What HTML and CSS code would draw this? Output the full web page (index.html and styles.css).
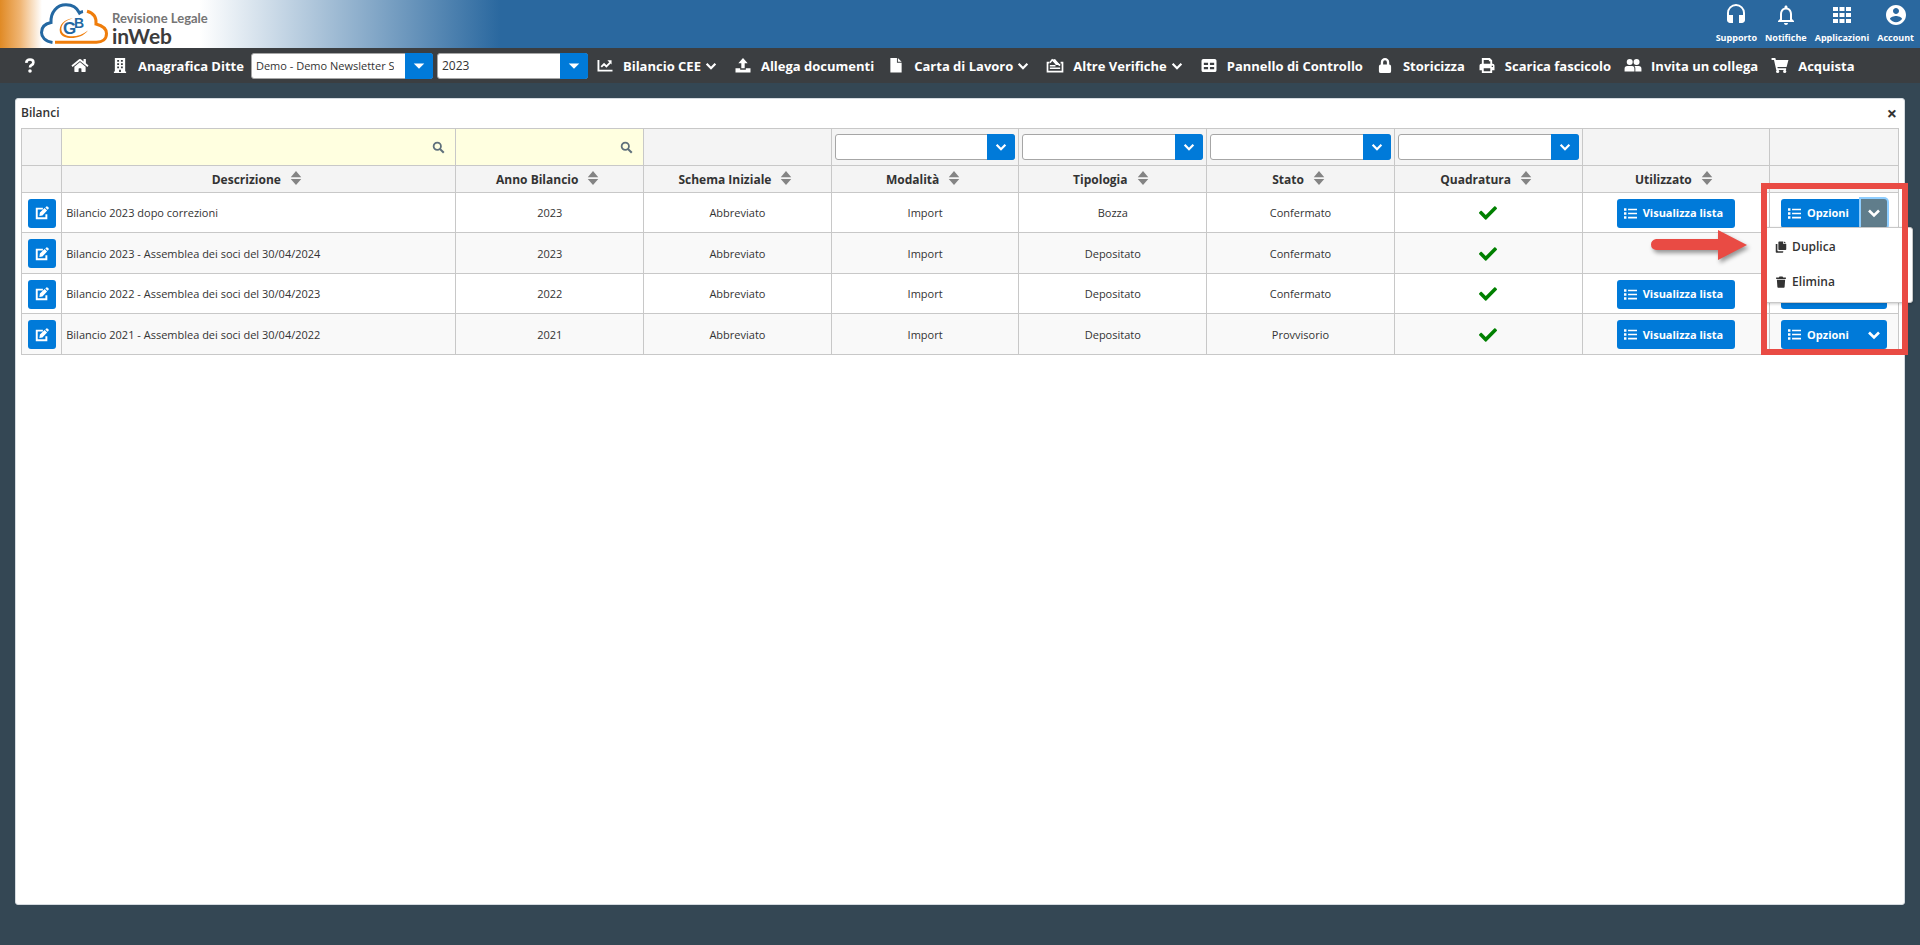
FILE: index.html
```html
<!DOCTYPE html>
<html lang="it">
<head>
<meta charset="utf-8">
<title>Revisione Legale inWeb - Bilanci</title>
<link rel="stylesheet" href="styles.css">
</head>
<body>
<svg class="sprite" aria-hidden="true">
  <symbol id="i-chevron" viewBox="0 0 16 16"><path d="M3 5.500l5 5 5-5" fill="none" stroke="currentColor" stroke-width="2.600"/></symbol>
  <symbol id="i-caret" viewBox="0 0 16 16"><path d="M2 5h12l-6 6z" fill="currentColor"/></symbol>
  <symbol id="i-sort" viewBox="0 0 12 16"><path d="M6 0l6 7H0zM6 16l6-7H0z" fill="currentColor"/></symbol>
  <symbol id="i-search" viewBox="0 0 16 16"><circle cx="6.500" cy="6.500" r="4.500" fill="none" stroke="currentColor" stroke-width="2.200"/><path d="M10 10l4.500 4.500" stroke="currentColor" stroke-width="2.600"/></symbol>
  <symbol id="i-edit" viewBox="0 0 16 16"><path d="M9 3H2v11h11V9.500" fill="none" stroke="currentColor" stroke-width="2.200"/><path d="M5 11.500l.6-4L11 2.200 13.800 5 8.500 10.900zM11.800 1.600L13 .5q.6-.5 1.200 0l1.300 1.300q.6.6 0 1.200L14.400 4.200z" fill="currentColor"/></symbol>
  <symbol id="i-list" viewBox="0 0 16 16"><path d="M0 1.500h3v3H0zM0 6.500h3v3H0zM0 11.500h3v3H0zM5 2h11v2H5zM5 7h11v2H5zM5 12h11v2H5z" fill="currentColor"/></symbol>
  <symbol id="i-check" viewBox="0 0 512 512"><path fill="currentColor" d="M173.900 439.400L7.500 273c-10-10-10-26.200 0-36.200l36.200-36.200c10-10 26.200-10 36.200 0L192 312.700 432.100 72.600c10-10 26.200-10 36.200 0l36.200 36.200c10 10 10 26.200 0 36.200L210.100 439.400c-10 10-26.200 10-36.200 0z"/></symbol>
  <symbol id="i-copy" viewBox="0 0 16 16"><path fill="currentColor" d="M1 4h2.200v8.500q0 1 1 1h6.800v1q0 1-1 1H2q-1 0-1-1zM5.500.5H11V4h4v7q0 1-1 1H5.500q-1 0-1-1V1.500q0-1 1-1zM12 .5L15 3h-3z"/></symbol>
  <symbol id="i-trash" viewBox="0 0 16 16"><path fill="currentColor" d="M1.500 2H5l1-1.500h4L11 2h3.500v2h-13zM2.500 5h11l-.7 9.500q-.1 1-1 1H4.200q-.9 0-1-1z"/></symbol>
  <symbol id="i-home" viewBox="0 0 576 512"><path fill="currentColor" d="M280.400 148.300L96 300.100V464a16 16 0 0 0 16 16l112.100-.3a16 16 0 0 0 15.900-16V368a16 16 0 0 1 16-16h64a16 16 0 0 1 16 16v95.600a16 16 0 0 0 16 16.100L464 480a16 16 0 0 0 16-16V300L295.700 148.300a12.200 12.200 0 0 0-15.300 0zM571.600 251.500L488 182.600V44a12 12 0 0 0-12-12h-56a12 12 0 0 0-12 12v72.600L318.500 43a48 48 0 0 0-61 0L4.300 251.500a12 12 0 0 0-1.600 16.900l25.500 31a12 12 0 0 0 16.900 1.600l235.300-193.700a12.200 12.200 0 0 1 15.300 0L530.900 301a12 12 0 0 0 16.900-1.600l25.500-31a12 12 0 0 0-1.700-16.900z"/></symbol>
  <symbol id="i-building" viewBox="0 0 16 16"><path fill="currentColor" fill-rule="evenodd" d="M2.500 0h11v14.500h1V16h-13v-1.500h1zM5 2v2h2V2zm4 0v2h2V2zM5 5.500v2h2v-2zm4 0v2h2v-2zM5 9v2h2V9zm4 0v2h2V9zM7 12.500V15h2v-2.500z"/></symbol>
  <symbol id="i-question" viewBox="0 0 16 16"><path d="M4 5.200Q4.300 1.600 8 1.600q3.600 0 3.600 3.100 0 1.800-1.900 2.800Q8 8.400 8 10.200" fill="none" stroke="currentColor" stroke-width="2.800"/><circle cx="8" cy="13.800" r="1.900" fill="currentColor"/></symbol>
  <symbol id="i-chart" viewBox="0 0 16 16"><path d="M1 2v11.500h15" fill="none" stroke="currentColor" stroke-width="2"/><path d="M4 9.500L7 6.500l2.500 2.500 4-4" fill="none" stroke="currentColor" stroke-width="2"/><path d="M10.500 2.500H15V7z" fill="currentColor"/></symbol>
  <symbol id="i-upload" viewBox="0 0 16 16"><path fill="currentColor" d="M8 0l5 5.500H9.800V11H6.200V5.500H3zM0 11h5v1.500h6V11h5v4.500H0z"/></symbol>
  <symbol id="i-file" viewBox="0 0 16 16"><path fill="currentColor" d="M2 0H9v5h5v10.500H2zM10 0l4 4h-4z"/></symbol>
  <symbol id="i-ballot" viewBox="0 0 18 16"><path d="M3 5H1v9.500h16V5h-2" fill="none" stroke="currentColor" stroke-width="1.800"/><path d="M3.500 5L6 2l8.500 6M3.500 8.200h6M3.500 11h11" fill="none" stroke="currentColor" stroke-width="1.700"/><path d="M5.500 2L9 1l5.500 6.500H10z" fill="currentColor"/></symbol>
  <symbol id="i-table" viewBox="0 0 16 16"><path fill="currentColor" fill-rule="evenodd" d="M2 1h12q2 0 2 2v10q0 2-2 2H2q-2 0-2-2V3q0-2 2-2zM2.500 5v2.500H7V5zM9 5v2.500h4.500V5zM2.500 9.500V12H7V9.500zM9 9.500V12h4.500V9.500z"/></symbol>
  <symbol id="i-lock" viewBox="0 0 16 16"><path fill="currentColor" fill-rule="evenodd" d="M3.500 7V4.500a4.500 4.500 0 0 1 9 0V7q2 0 2 2v5q0 2-2 2h-9q-2 0-2-2V9q0-2 2-2zM6 7h4V4.500a2 2 0 0 0-4 0z"/></symbol>
  <symbol id="i-print" viewBox="0 0 16 16"><path fill="currentColor" fill-rule="evenodd" d="M2.500 0H11l2.500 2.500V6H14q2 0 2 2v5h-2.500v3h-11v-3H0V8q0-2 2-2h.5zM4.500 2v4h7V3.500H10V2zM4.500 11v3h7v-3zM13 8.200v1.400h1.400V8.200z"/></symbol>
  <symbol id="i-users" viewBox="0 0 18 16"><path fill="currentColor" d="M5.500 1a3.200 3.200 0 1 1 0 6.400 3.200 3.200 0 0 1 0-6.400zM12.800 1a3.200 3.200 0 1 1 0 6.400 3.200 3.200 0 0 1 0-6.400zM0 14.500V11.500q0-3 3-3h5q2.500 0 2.500 3v3zM11.500 14.500V11q0-1.500-1-2.500H15q3 0 3 3v3z"/></symbol>
  <symbol id="i-cart" viewBox="0 0 18 16"><path fill="currentColor" d="M0 0h4l.6 2H18l-2 7.500H6.200l.4 1.500H15.500v1.800H5L2.600 2H0z"/><circle cx="6.500" cy="14.300" r="1.700" fill="currentColor"/><circle cx="14" cy="14.300" r="1.700" fill="currentColor"/></symbol>
  <symbol id="i-headset" viewBox="0 0 24 24"><path fill="currentColor" d="M12 1a9 9 0 0 0-9 9v7c0 1.660 1.340 3 3 3h3v-8H5v-2c0-3.870 3.130-7 7-7s7 3.130 7 7v2h-4v8h3c1.660 0 3-1.340 3-3v-7a9 9 0 0 0-9-9z"/></symbol>
  <symbol id="i-bell" viewBox="0 0 24 24"><path fill="currentColor" d="M12 22c1.100 0 2-.9 2-2h-4c0 1.100.9 2 2 2zm6-6v-5c0-3.070-1.630-5.640-4.500-6.320V4c0-.83-.67-1.500-1.500-1.500s-1.500.67-1.500 1.500v.68C7.640 5.360 6 7.920 6 11v5l-2 2v1h16v-1l-2-2zm-2 1H8v-6c0-2.480 1.510-4.500 4-4.500s4 2.020 4 4.500v6z"/></symbol>
  <symbol id="i-apps" viewBox="0 0 24 24"><path fill="currentColor" d="M3 4h5v4H3zM9.500 4h5v4h-5zM16 4h5v4h-5zM3 10h5v4H3zM9.500 10h5v4h-5zM16 10h5v4h-5zM3 16h5v4H3zM9.500 16h5v4h-5zM16 16h5v4h-5z"/></symbol>
  <symbol id="i-account" viewBox="0 0 24 24"><path fill="currentColor" d="M12 2C6.480 2 2 6.480 2 12s4.480 10 10 10 10-4.480 10-10S17.520 2 12 2zm0 3c1.660 0 3 1.340 3 3s-1.340 3-3 3-3-1.340-3-3 1.340-3 3-3zm0 14.200c-2.500 0-4.710-1.280-6-3.220.03-1.990 4-3.080 6-3.080 1.990 0 5.970 1.090 6 3.080-1.290 1.940-3.500 3.220-6 3.220z"/></symbol>
</svg>

<header class="header">
  <a class="brand" href="#">
    <svg class="brand-logo" viewBox="0 0 68 42" role="img" aria-label="GB">
      <path d="M12.500 39.500C5 38.500 1.500 34 1.500 29.500c0-6 4.500-9 9.500-10C10.500 9 17 1.800 26 1.800c7 0 11.500 4 13.500 8.200q1.500-1.200 3.500-1.500" fill="none" stroke="#2468a2" stroke-width="3"/>
      <path d="M47 8.300c7.500 2 9.500 7.200 9 12.700 6 1.500 10.500 5 10.500 9.500 0 6-4.500 8.700-10 8.700H15" fill="none" stroke="#ef7d0b" stroke-width="3"/>
      <path d="M33 15.500C25 17 20.500 22 21.500 27.500c1.500 7.500 17 8 26.500 0-7 9.500-25 10-28 2C18 22 25 15.500 33 15.500z" fill="#ef7d0b"/>
      <text x="23" y="31" class="logo-g">G</text>
      <text x="34" y="25" class="logo-b">B</text>
    </svg>
    <span class="brand-text"><span class="brand-top">Revisione Legale</span><span class="brand-bottom">inWeb</span></span>
  </a>
  <nav class="quick" aria-label="Servizi">
    <a href="#"><svg><use href="#i-headset"/></svg>Supporto</a>
    <a href="#"><svg><use href="#i-bell"/></svg>Notifiche</a>
    <a href="#"><svg><use href="#i-apps"/></svg>Applicazioni</a>
    <a href="#"><svg><use href="#i-account"/></svg>Account</a>
  </nav>
</header>

<nav class="toolbar" aria-label="Menu principale">
  <a class="tool tool-icon" href="#" aria-label="Aiuto"><svg><use href="#i-question"/></svg></a>
  <a class="tool tool-icon" href="#" aria-label="Home"><svg><use href="#i-home"/></svg></a>
  <label class="tool tool-company" for="ditta"><svg><use href="#i-building"/></svg>Anagrafica Ditte</label>
  <span class="combo combo-company"><select id="ditta"><option>Demo - Demo Newsletter Srl</option></select><svg><use href="#i-caret"/></svg></span>
  <span class="combo combo-year"><select id="anno" aria-label="Anno"><option>2023</option></select><svg><use href="#i-caret"/></svg></span>
  <button class="tool tool-menu"><svg><use href="#i-chart"/></svg>Bilancio CEE<svg class="arrow"><use href="#i-chevron"/></svg></button>
  <a class="tool" href="#"><svg><use href="#i-upload"/></svg>Allega documenti</a>
  <button class="tool tool-menu"><svg><use href="#i-file"/></svg>Carta di Lavoro<svg class="arrow"><use href="#i-chevron"/></svg></button>
  <button class="tool tool-menu"><svg><use href="#i-ballot"/></svg>Altre Verifiche<svg class="arrow"><use href="#i-chevron"/></svg></button>
  <a class="tool" href="#"><svg><use href="#i-table"/></svg>Pannello di Controllo</a>
  <a class="tool" href="#"><svg><use href="#i-lock"/></svg>Storicizza</a>
  <a class="tool" href="#"><svg><use href="#i-print"/></svg>Scarica fascicolo</a>
  <a class="tool" href="#"><svg><use href="#i-users"/></svg>Invita un collega</a>
  <a class="tool" href="#"><svg><use href="#i-cart"/></svg>Acquista</a>
</nav>

<main class="page">
  <section class="panel">
    <div class="panel-head"><h1>Bilanci</h1><button class="close" aria-label="Chiudi">×</button></div>
    <div class="grid-wrap">
      <table class="grid">
        <colgroup><col class="c-edit"><col class="c-desc"><col><col><col><col><col><col><col><col class="c-opt"></colgroup>
        <thead>
          <tr class="filters">
            <td></td>
            <td class="search"><div><input aria-label="Filtra Descrizione"><button aria-label="Cerca"><svg><use href="#i-search"/></svg></button></div></td>
            <td class="search"><div><input aria-label="Filtra Anno Bilancio"><button aria-label="Cerca"><svg><use href="#i-search"/></svg></button></div></td>
            <td></td>
            <td><span class="combo"><select aria-label="Filtra Modalità"><option></option></select><svg><use href="#i-chevron"/></svg></span></td>
            <td><span class="combo"><select aria-label="Filtra Tipologia"><option></option></select><svg><use href="#i-chevron"/></svg></span></td>
            <td><span class="combo"><select aria-label="Filtra Stato"><option></option></select><svg><use href="#i-chevron"/></svg></span></td>
            <td><span class="combo"><select aria-label="Filtra Quadratura"><option></option></select><svg><use href="#i-chevron"/></svg></span></td>
            <td></td>
            <td></td>
          </tr>
          <tr class="titles">
            <th></th>
            <th>Descrizione<svg><use href="#i-sort"/></svg></th>
            <th>Anno Bilancio<svg><use href="#i-sort"/></svg></th>
            <th>Schema Iniziale<svg><use href="#i-sort"/></svg></th>
            <th>Modalità<svg><use href="#i-sort"/></svg></th>
            <th>Tipologia<svg><use href="#i-sort"/></svg></th>
            <th>Stato<svg><use href="#i-sort"/></svg></th>
            <th>Quadratura<svg><use href="#i-sort"/></svg></th>
            <th>Utilizzato<svg><use href="#i-sort"/></svg></th>
            <th></th>
          </tr>
        </thead>
        <tbody>
          <tr>
            <td><button class="btn btn-edit" aria-label="Modifica"><svg><use href="#i-edit"/></svg></button></td>
            <td class="desc">Bilancio 2023 dopo correzioni</td><td>2023</td><td>Abbreviato</td><td>Import</td><td>Bozza</td><td>Confermato</td>
            <td><svg class="check" role="img" aria-label="Sì"><use href="#i-check"/></svg></td>
            <td><button class="btn"><svg><use href="#i-list"/></svg>Visualizza lista</button></td>
            <td><div class="split"><button class="btn btn-main"><svg><use href="#i-list"/></svg>Opzioni</button><button class="btn btn-drop is-open" aria-label="Altre opzioni" aria-expanded="true"><svg><use href="#i-chevron"/></svg></button>
              <div class="menu"><button><svg><use href="#i-copy"/></svg>Duplica</button><button><svg><use href="#i-trash"/></svg>Elimina</button></div></div></td>
          </tr>
          <tr>
            <td><button class="btn btn-edit" aria-label="Modifica"><svg><use href="#i-edit"/></svg></button></td>
            <td class="desc">Bilancio 2023 - Assemblea dei soci del 30/04/2024</td><td>2023</td><td>Abbreviato</td><td>Import</td><td>Depositato</td><td>Confermato</td>
            <td><svg class="check" role="img" aria-label="Sì"><use href="#i-check"/></svg></td>
            <td></td>
            <td></td>
          </tr>
          <tr>
            <td><button class="btn btn-edit" aria-label="Modifica"><svg><use href="#i-edit"/></svg></button></td>
            <td class="desc">Bilancio 2022 - Assemblea dei soci del 30/04/2023</td><td>2022</td><td>Abbreviato</td><td>Import</td><td>Depositato</td><td>Confermato</td>
            <td><svg class="check" role="img" aria-label="Sì"><use href="#i-check"/></svg></td>
            <td><button class="btn"><svg><use href="#i-list"/></svg>Visualizza lista</button></td>
            <td><div class="split"><button class="btn btn-main"><svg><use href="#i-list"/></svg>Opzioni</button><button class="btn btn-drop" aria-label="Altre opzioni"><svg><use href="#i-chevron"/></svg></button></div></td>
          </tr>
          <tr>
            <td><button class="btn btn-edit" aria-label="Modifica"><svg><use href="#i-edit"/></svg></button></td>
            <td class="desc">Bilancio 2021 - Assemblea dei soci del 30/04/2022</td><td>2021</td><td>Abbreviato</td><td>Import</td><td>Depositato</td><td>Provvisorio</td>
            <td><svg class="check" role="img" aria-label="Sì"><use href="#i-check"/></svg></td>
            <td><button class="btn"><svg><use href="#i-list"/></svg>Visualizza lista</button></td>
            <td><div class="split"><button class="btn btn-main"><svg><use href="#i-list"/></svg>Opzioni</button><button class="btn btn-drop" aria-label="Altre opzioni"><svg><use href="#i-chevron"/></svg></button></div></td>
          </tr>
        </tbody>
      </table>
      <div class="highlight"></div>
      <svg class="pointer" viewBox="0 0 98 32" aria-hidden="true"><path d="M6 10h62V1l29 15-29 15V21H6Q1 20 1 15.500T6 10z" fill="#e94b44"/></svg>
    </div>
  </section>
</main>
</body>
</html>
```
FILE: styles.css
```css
* { box-sizing: border-box; }

body {
  margin: 0;
  min-height: 100vh;
  display: flex;
  flex-direction: column;
  background: #344754;
  color: #333;
  font: 11px/16px "Open Sans", "Noto Sans", sans-serif;
}

button, input, select { font: inherit; color: inherit; margin: 0; }
button { border: 0; padding: 0; background: none; }
a { color: inherit; text-decoration: none; }
.sprite { display: none; }

/* Header */
.header {
  height: 48px;
  display: flex;
  justify-content: space-between;
  padding: 0 6px 0 40px;
  background: linear-gradient(90deg, #e08a25 0, #f0b573 20px, #fff 42px, #fff 200px, #2a689f 500px);
}
.brand { display: flex; align-items: center; gap: 4px; }
.brand-logo { width: 68px; height: 42px; }
.logo-g, .logo-b { font: 700 17px "Liberation Sans", sans-serif; fill: #2468a2; }
.logo-b { font-size: 14px; }
.brand-text { display: flex; flex-direction: column; font-family: Lato, sans-serif; padding-top: 8px; }
.brand-top { font-size: 13px; line-height: 16px; font-weight: 700; color: #757575; }
.brand-bottom { font-size: 21px; line-height: 20px; font-weight: 700; color: #3c3c3c; }
.quick { display: flex; gap: 8px; color: #fff; font-size: 9px; font-weight: 700; line-height: 12px; }
.quick a { display: flex; flex-direction: column; align-items: center; gap: 5px; padding-top: 3px; }
.quick svg { width: 24px; height: 24px; }

/* Toolbar */
.toolbar {
  min-height: 35px;
  display: flex;
  align-items: center;
  padding: 0 20px 0 5px;
  background: #3b3e41;
  color: #fff;
  font-size: 13px;
  font-weight: 700;
}
.tool { display: flex; align-items: center; gap: 9px; margin-right: 13px; white-space: nowrap; }
.tool svg { width: 18px; height: 15px; }
.tool-icon { width: 50px; margin: 0; justify-content: center; }
.tool-company { padding-left: 6px; margin-right: 7px; }
.tool-menu { margin-right: 16px; }
.tool .arrow { width: 14px; height: 14px; margin-left: -6px; }

/* Drop-down boxes */
.combo { display: grid; grid-template-columns: 1fr 28px; height: 26px; }
.combo select {
  grid-area: 1 / 1 / 2 / 3;
  width: 100%;
  min-width: 0;
  appearance: none;
  padding: 0 32px 0 4px;
  border: 1px solid #a6a6a6;
  border-radius: 3px;
  background: #fff;
  color: #333;
  font-size: 12px;
  font-weight: 400;
  overflow: hidden;
}
.combo svg {
  grid-area: 1 / 2;
  width: 28px;
  height: 26px;
  padding: 6px;
  background: #007ad9;
  border-radius: 0 3px 3px 0;
  color: #fff;
  pointer-events: none;
}
.combo-company { width: 182px; margin-right: 4px; }
.combo-company select { font-size: 11px; padding-right: 38px; }
.combo-year { width: 151px; margin-right: 8px; }

/* Panel */
.page { flex: 1; display: flex; padding: 15px 15px 40px; }
.panel {
  flex: 1;
  min-width: 0;
  padding: 0 5px;
  background: #fff;
  border: 1px solid #d5dbe0;
  border-radius: 3px;
}
.panel-head { height: 29px; display: flex; align-items: center; justify-content: space-between; padding-bottom: 2px; }
.panel-head h1 { margin: 0; font-size: 12px; font-weight: 600; }
.close { width: 14px; font-size: 18px; font-weight: 700; }

/* Table */
.grid-wrap { position: relative; }
.grid { width: 100%; table-layout: fixed; border-collapse: collapse; }
.grid td, .grid th { border: 1px solid #c8c8c8; padding: 0 4px; text-align: center; }
.grid col { width: 10%; }
.grid .c-edit { width: 40px; }
.grid .c-desc { width: 21%; }
.grid .c-opt { width: 128px; }
.grid thead { background: #f4f4f4; }
.grid .filters td { padding: 0 3px; }
.filters { height: 37px; }
.titles { height: 27px; font-size: 12px; }
.grid .titles th { padding: 1px 8px 0 4px; }
.titles svg { width: 12px; height: 14px; margin-left: 9px; color: #848484; vertical-align: -1px; }
.grid tbody tr { height: 40px; }
.grid tbody tr:nth-child(even) { height: 41px; background: #f9f9f9; }
.grid tbody td { padding-top: 1px; }
.grid .desc { text-align: left; }
.grid .search { background: #ffffe0; }
.search div { display: flex; align-items: center; }
.search input { flex: 1; min-width: 0; height: 26px; border: 0; background: transparent; }
.search button { width: 28px; height: 34px; display: grid; place-items: center; color: #5f707b; }
.search svg { width: 13px; height: 13px; }
.check { width: 18px; height: 18px; color: #008000; vertical-align: middle; }

/* Buttons */
.btn {
  height: 29px;
  display: inline-flex;
  align-items: center;
  gap: 6px;
  padding: 0 12px 0 7px;
  background: #007ad9;
  color: #fff;
  border-radius: 3px;
  font-weight: 700;
  vertical-align: middle;
  white-space: nowrap;
}
.btn svg { width: 13px; height: 13px; }
.btn-edit { width: 28px; padding: 0; justify-content: center; }
.btn-edit svg { width: 14px; height: 14px; }
.split { position: relative; display: inline-flex; vertical-align: middle; }
.btn-main { width: 80px; padding-right: 0; border-radius: 3px 0 0 3px; }
.btn-drop { width: 26px; padding: 0; justify-content: center; border-radius: 0 3px 3px 0; }
.btn-drop svg { width: 16px; height: 16px; }
.btn-drop.is-open { background: #607d8b; box-shadow: 0 0 0 2px #8dcdff; }

/* Options menu */
.menu {
  position: absolute;
  z-index: 2;
  top: 28px;
  left: -16px;
  width: 148px;
  padding: 2px 0;
  background: #fff;
  border: 1px solid #c8c8c8;
  border-radius: 0 3px 3px 0;
  box-shadow: 0 1px 3px rgba(0, 0, 0, .2);
}
.menu button {
  width: 100%;
  height: 35px;
  display: flex;
  align-items: center;
  gap: 5px;
  padding-left: 9px;
  font-size: 12px;
  font-weight: 600;
}
.menu svg { width: 12px; height: 12px; }

/* Callout drawn over the grid */
.highlight {
  position: absolute;
  z-index: 3;
  top: 55px;
  right: -9px;
  width: 147px;
  height: 172px;
  border: 6px solid #e94b44;
  pointer-events: none;
}
.pointer {
  position: absolute;
  z-index: 3;
  top: 101px;
  right: 151px;
  width: 98px;
  height: 32px;
  filter: drop-shadow(2px 3px 2px rgba(0, 0, 0, .4));
}
```
